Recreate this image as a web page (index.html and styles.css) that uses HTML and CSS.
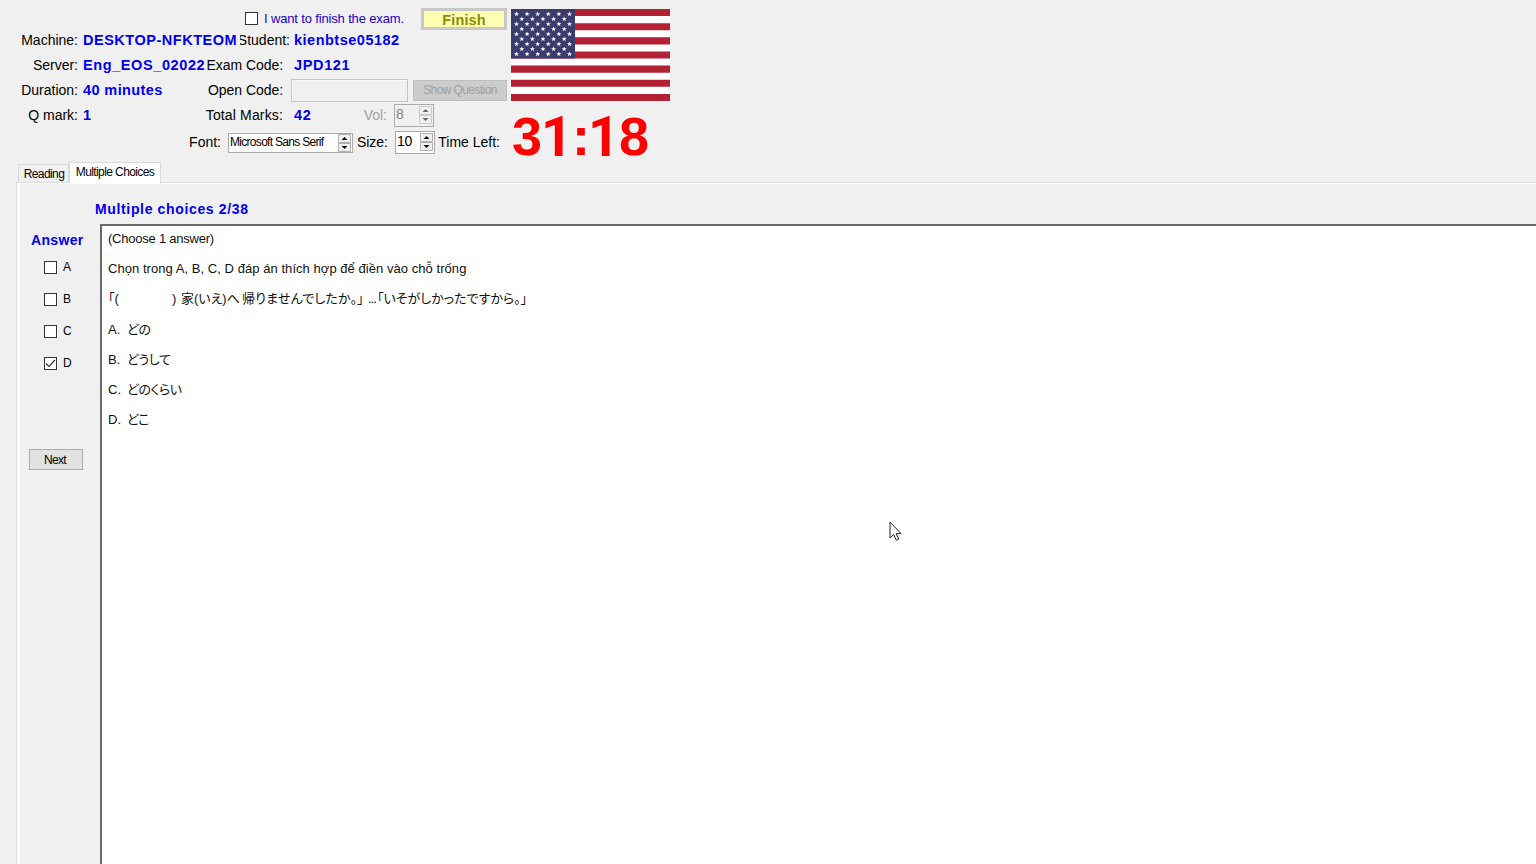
FILE: index.html
```html
<!DOCTYPE html>
<html lang="vi">
<head>
<meta charset="utf-8">
<title>Exam</title>
<link rel="stylesheet" href="styles.css">
</head>
<body>
<header class="header">
  <div class="info">
    <div class="row row-finish">
      <span class="check"></span><span class="want">I want to finish the exam.</span>
      <button class="finish">Finish</button>
    </div>
    <div class="row">
      <span class="label first">Machine:</span><b class="value machine">DESKTOP-NFKTEOM</b>
      <span class="label student">Student:</span><b class="value right">kienbtse05182</b>
    </div>
    <div class="row">
      <span class="label first">Server:</span><b class="value server">Eng_EOS_02022</b>
      <span class="label exam">Exam Code:</span><b class="value code">JPD121</b>
    </div>
    <div class="row">
      <span class="label first">Duration:</span><b class="value duration">40 minutes</b>
      <span class="label exam">Open Code:</span><span class="open-input"></span><button class="show">Show Question</button>
    </div>
    <div class="row">
      <span class="label first">Q mark:</span><b class="value mark">1</b>
      <span class="label total">Total Marks:</span><b class="value code marks">42</b>
      <span class="label vol">Vol:</span>
      <span class="spin spin-vol"><span class="num">8</span><svg class="arrows" viewBox="0 0 13 18"><path class="btn" d="M.5.5h12v8H.5zM.5 9.5h12v8H.5z"/><path class="tri" d="M3.5 6h6l-3-3zM3.5 12h6l-3 3z"/></svg></span>
    </div>
    <div class="row row-font">
      <span class="label font">Font:</span>
      <span class="spin spin-font"><span class="fname">Microsoft Sans Serif</span><svg class="arrows" viewBox="0 0 13 18"><path class="btn" d="M.5.5h12v8H.5zM.5 9.5h12v8H.5z"/><path class="tri" d="M3.5 6h6l-3-3zM3.5 12h6l-3 3z"/></svg></span>
      <span class="label size">Size:</span>
      <span class="spin spin-size"><span class="num">10</span><svg class="arrows" viewBox="0 0 13 18"><path class="btn" d="M.5.5h12v8H.5zM.5 9.5h12v8H.5z"/><path class="tri" d="M3.5 6h6l-3-3zM3.5 12h6l-3 3z"/></svg></span>
      <span class="label left">Time Left:</span>
    </div>
  </div>
  <div class="clock">
    <svg class="flag" viewBox="0 0 159 92" preserveAspectRatio="none">
      <defs>
        <path id="star" fill="#fff" d="M0-2.6.7-.8 2.5-.8 1 .4 1.6 2.2 0 1.1-1.6 2.2-1 .4-2.5-.8-.7-.8z"/>
        <g id="six"><use href="#star" x="5.5"/><use href="#star" x="16.1"/><use href="#star" x="26.7"/><use href="#star" x="37.3"/><use href="#star" x="47.9"/><use href="#star" x="58.5"/></g>
        <g id="five"><use href="#star" x="10.8"/><use href="#star" x="21.4"/><use href="#star" x="32"/><use href="#star" x="42.6"/><use href="#star" x="53.2"/></g>
      </defs>
      <path fill="#fff" d="M0 0h159v92H0z"/>
      <path stroke="#b22234" stroke-width="7.08" d="M0 3.54h159M0 17.7h159M0 31.85h159M0 46h159M0 60.15h159M0 74.3h159M0 88.46h159"/>
      <path fill="#3c3b6e" d="M0 0h64v49.5H0z"/>
      <use href="#six" y="5"/><use href="#five" y="10"/><use href="#six" y="15"/><use href="#five" y="20"/><use href="#six" y="25"/><use href="#five" y="30"/><use href="#six" y="35"/><use href="#five" y="40"/><use href="#six" y="45"/>
    </svg>
    <div class="time">3<span class="one">1</span><span class="colon">:</span><span class="one">1</span>8</div>
  </div>
</header>
<nav class="tabs"><span class="tab reading">Reading</span><span class="tab active">Multiple Choices</span></nav>
<main class="panel">
  <b class="heading">Multiple choices 2/38</b>
  <div class="body">
    <aside class="answers">
      <b class="answer-title">Answer</b>
      <label class="option"><span class="check"></span>A</label>
      <label class="option"><span class="check"></span>B</label>
      <label class="option"><span class="check"></span>C</label>
      <label class="option"><span class="check"><svg viewBox="0 0 11 11"><path d="M1 5.5 4 8.5 10 2"/></svg></span>D</label>
      <button class="next">Next</button>
    </aside>
    <section class="question">
      <p class="choose">(Choose 1 answer)</p>
      <p class="instruction">Chọn trong A, B, C, D đáp án thích hợp để điền vào chỗ trống</p>
      <p class="sentence"><span class="s1">「(</span><span class="s2">)</span><span class="s3">家(いえ)へ</span><span class="s4">帰りませんでしたか。」</span><span class="s5">...</span><span class="s6">「いそがしかったですから。」</span></p>
      <p><span class="letter">A.</span><span class="jp">どの</span></p>
      <p><span class="letter">B.</span><span class="jp">どうして</span></p>
      <p><span class="letter">C.</span><span class="jp">どのくらい</span></p>
      <p><span class="letter">D.</span><span class="jp">どこ</span></p>
    </section>
  </div>
</main>
<svg class="cursor" viewBox="0 0 13 21"><path d="M1 1v16l3.7-3.5 2.6 5.7 2.5-1.1-2.6-5.5H12z"/></svg>
</body>
</html>
```
FILE: styles.css
```css
* { box-sizing: border-box; }
body {
  margin: 0;
  height: 864px;
  overflow: hidden;
  display: flex;
  flex-direction: column;
  background: #f0f0f0;
  color: #000;
  font-family: "Liberation Sans", "Noto Sans CJK JP", sans-serif;
}
button { font-family: inherit; padding: 0; border-radius: 0; }

.header { display: flex; height: 162px; flex: none; }
.info { width: 511px; padding-top: 8px; }
.row { display: flex; height: 25px; align-items: center; white-space: nowrap; }
.row-finish { height: 20px; padding-left: 245px; }
.row-font { height: 29px; }

.check {
  width: 13px;
  height: 13px;
  flex: none;
  display: flex;
  border: 1px solid #333;
  background: #fff;
}
.check svg { width: 11px; height: 11px; fill: none; stroke: #333; stroke-width: 1.2; }
.want { width: 157px; margin-left: 6px; font-size: 13px; letter-spacing: -.15px; color: #1a00c8; }
.finish {
  width: 86px;
  height: 22px;
  margin-top: 2px;
  padding-top: 2px;
  border: 3px solid #c8c8c8;
  background: #ffffb4;
  color: #8c8c00;
  font-size: 14.5px;
  line-height: 14px;
  font-weight: bold;
  letter-spacing: .15px;
}

.label { font-size: 14px; line-height: 16px; padding-bottom: 2px; text-align: right; flex: none; }
.first { width: 78px; }
.value { margin-left: 5px; flex: none; color: #0000ec; font-size: 14.5px; line-height: 17px; letter-spacing: .5px; }
.machine { width: 157px; letter-spacing: .52px; }
.student { width: 50px; display: flex; justify-content: flex-end; overflow: hidden; }
.right { margin-left: 4px; }
.server { width: 123px; letter-spacing: .6px; }
.duration { width: 123px; letter-spacing: .4px; }
.mark { width: 122px; }
.exam { width: 77px; letter-spacing: -.05px; }
.total { width: 78px; letter-spacing: .15px; }
.code { margin-left: 11px; letter-spacing: .65px; }
.marks { width: 69px; }
.open-input { width: 117px; height: 23px; margin-left: 8px; border: 1px solid #c4c4c4; box-shadow: inset 1px 1px #fafafa; }
.show { width: 94px; height: 21px; margin-left: 5px; margin-bottom: 1px; border: 1px solid #bfbfbf; background: #ccc; color: #a0a0a0; font-size: 12px; letter-spacing: -.6px; }
.vol { width: 24px; color: #a0a0a0; }

.spin { display: flex; flex: none; justify-content: space-between; align-items: center; border: 1px solid #aaa; background: #fff; }
.arrows { width: 13px; height: 18px; flex: none; margin-right: 1px; }
.btn { fill: #f0f0f0; stroke: #b0b0b0; }
.tri { fill: #111; }
.spin-vol { width: 40px; height: 23px; margin-left: 7px; margin-bottom: 1px; background: #f0f0f0; color: #858585; }
.spin-vol .tri { fill: #666; }
.spin-vol .btn { stroke: #ccc; }
.num { padding: 0 0 2px 1px; font-size: 14px; letter-spacing: -.4px; }
.font { width: 221px; }
.spin-font { width: 125px; height: 20px; margin-left: 7px; }
.fname { padding: 0 0 1px 1px; font-size: 12px; letter-spacing: -.7px; }
.size { width: 34px; margin-left: 1px; }
.spin-size { width: 40px; height: 23px; margin-left: 7px; margin-bottom: 1px; }
.left { width: 65px; }

.clock { padding-top: 9px; }
.flag { display: block; width: 159px; height: 92px; }
.time { display: flex; margin-top: 7px; padding-left: 1px; height: 54px; line-height: 57px; color: #f00; font-size: 54px; font-weight: bold; }
.one { width: 30px; padding-top: 1px; font-family: Roboto, sans-serif; font-size: 55px; margin-left: -1px; margin-right: 1px; }
.colon { width: 17px; }

.tabs { display: flex; flex: none; height: 20px; padding-left: 18px; align-items: flex-end; font-size: 12px; }
.tab { border: 1px solid #d9d9d9; border-bottom: 0; text-align: center; }
.reading { width: 51px; height: 18px; padding-left: 1px; line-height: 19px; letter-spacing: -.6px; }
.active { width: 92px; height: 21px; line-height: 19px; letter-spacing: -.6px; margin-bottom: -1px; background: #fff; z-index: 1; }

.panel { flex: 1; display: flex; flex-direction: column; margin-left: 16px; border: solid #dcdcdc; border-width: 1px 0 0 1px; box-shadow: inset 3px 1px #fff; }
.heading { height: 41px; padding: 18px 0 0 78px; flex: none; color: #0000ec; font-size: 14px; line-height: 16px; letter-spacing: .65px; }
.body { display: flex; flex: 1; }
.answers { width: 83px; display: flex; flex-direction: column; }
.answer-title { margin: 8px 0 3px 14px; color: #0000ec; font-size: 14px; line-height: 16px; letter-spacing: .35px; }
.option { display: flex; align-items: center; gap: 6px; height: 32px; padding-left: 27px; font-size: 12px; }
.next { width: 54px; height: 21px; margin: 70px 0 0 12px; padding-right: 2px; border: 1px solid #adadad; background: #e1e1e1; color: #000; font-size: 12px; letter-spacing: -.7px; }

.question { flex: 1; padding-left: 6px; border: solid #696969; border-width: 2px 0 0 2px; background: #fff; color: #111; font-size: 13px; }
.question p { display: flex; margin: 0; height: 30px; line-height: 25px; white-space: pre; }
.choose { letter-spacing: -.23px; }
.instruction { letter-spacing: .05px; }
.letter { width: 19px; padding-top: 1px; }
.jp, .sentence { font-feature-settings: "palt"; }
.jp { letter-spacing: -.5px; padding-top: 1px; }
.s1 { width: 64px; }
.s2 { width: 9px; }
.s3 { width: 61px; }
.s4 { width: 126px; letter-spacing: .15px; }
.s5 { width: 9px; letter-spacing: -1px; }

.cursor { position: absolute; left: 889px; top: 521px; width: 13px; height: 21px; fill: #fff; stroke: #222; }
```
